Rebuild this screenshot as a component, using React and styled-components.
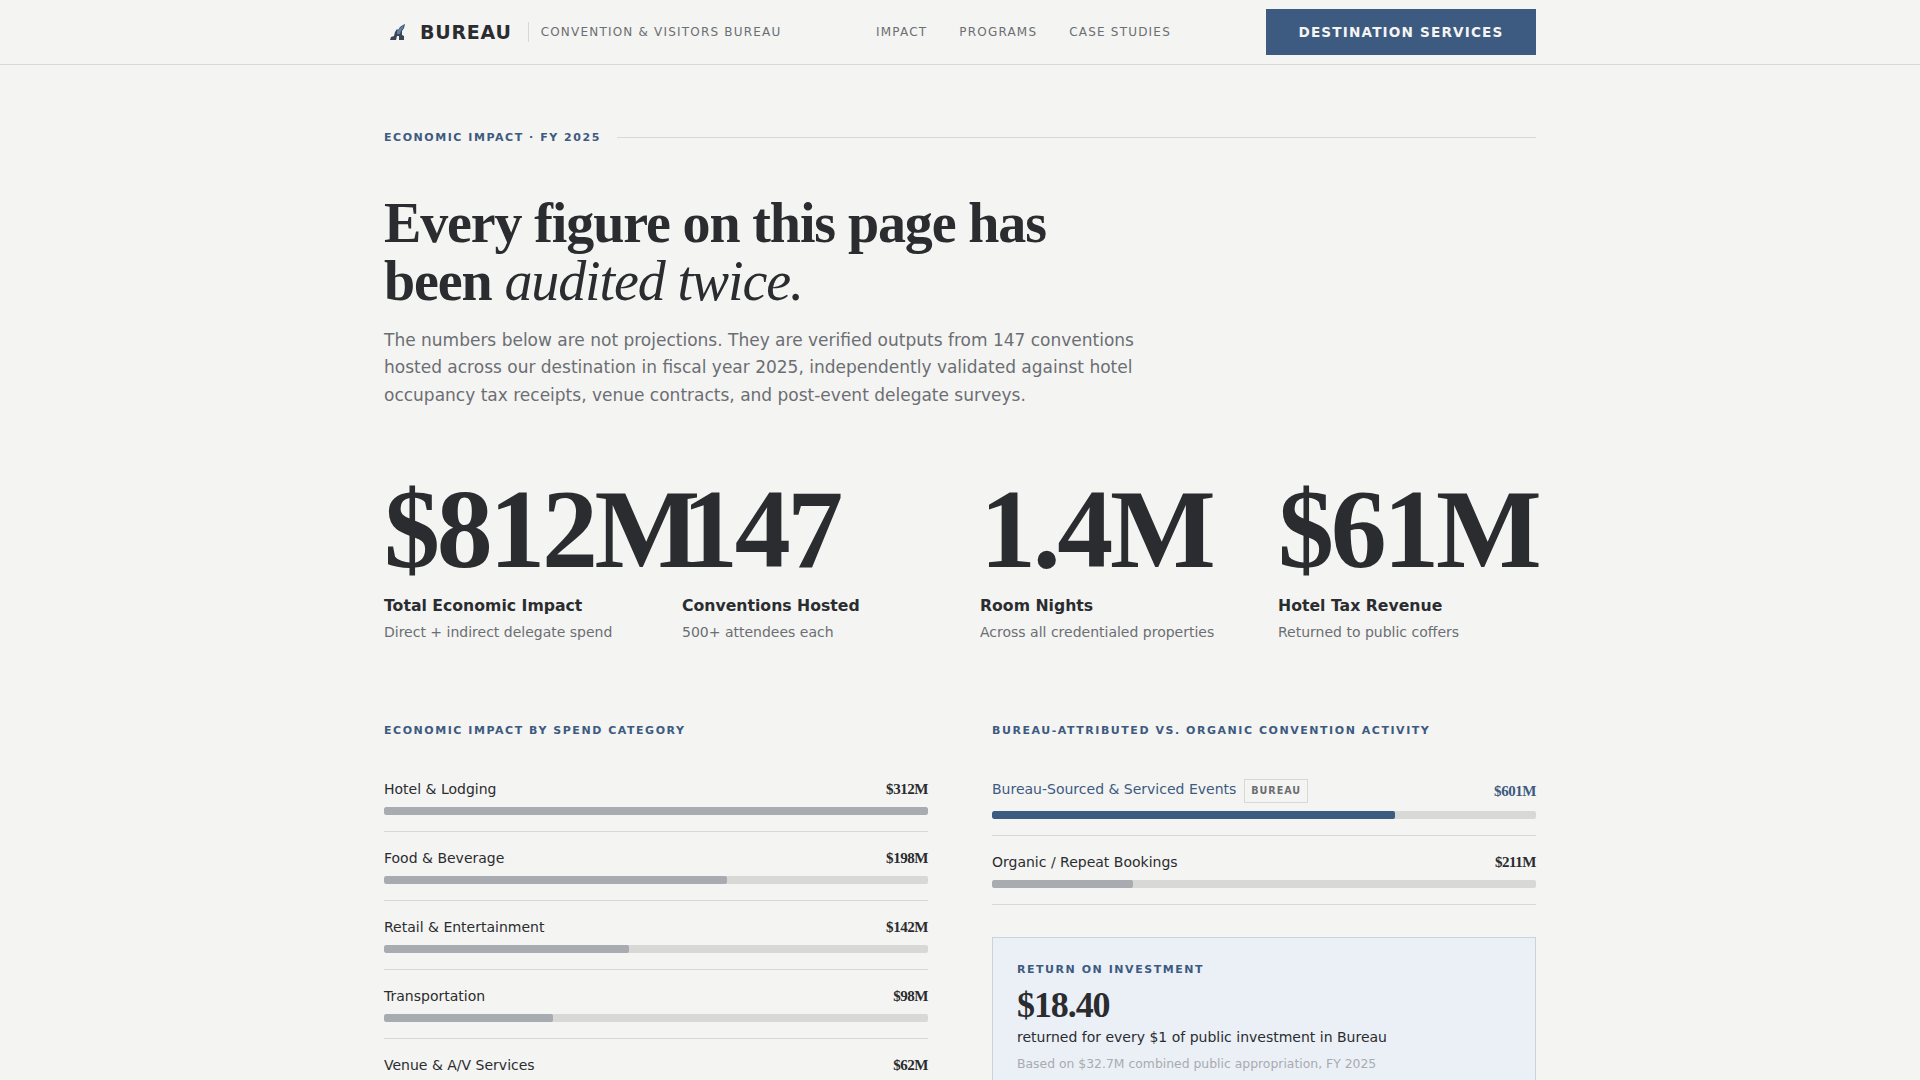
import React from 'react';
import styled, { createGlobalStyle } from 'styled-components';

const GlobalStyle = createGlobalStyle`
html, body {
  margin: 0;
  padding: 0;
  background: #f4f4f2;
  height: 1080px;
  overflow: hidden;
}
* { box-sizing: border-box; }
`;

const sans = `"DejaVu Sans", sans-serif`;
const serif = `"Liberation Serif", serif`;

const Page = styled.div`
  background: #f4f4f2;
  color: #2a2c30;
  font-family: ${sans};
`;

const Nav = styled.nav`
  height: 65px;
  border-bottom: 1px solid #d8d8d6;
`;

const NavInner = styled.div`
  width: 1152px;
  height: 64px;
  margin: 0 auto;
  display: flex;
  align-items: center;
`;

const Brand = styled.div`
  display: flex;
  align-items: center;
  width: 492px;
`;

const LogoMark = styled.svg`
  width: 18px;
  height: 18px;
  margin-left: 5px;
  margin-right: 13px;
`;

const BrandName = styled.span`
  font-size: 19px;
  font-weight: 700;
  letter-spacing: 0.76px;
  color: #2a2c30;
`;

const BrandSub = styled.span`
  margin-left: 16px;
  padding-left: 12px;
  border-left: 1px solid #d8d8d6;
  font-size: 12px;
  letter-spacing: 1.2px;
  line-height: 20px;
  color: #6b6e73;
`;

const NavLinks = styled.div`
  display: flex;
  gap: 32px;
`;

const NavLink = styled.a`
  font-size: 12px;
  letter-spacing: 1.2px;
  color: #6b6e73;
`;

const NavButton = styled.button`
  margin-left: auto;
  width: 270px;
  height: 46px;
  border: none;
  background: #3d5a80;
  color: #f4f4f2;
  font-family: ${sans};
  font-size: 13.6px;
  font-weight: 700;
  letter-spacing: 1.17px;
`;

const Main = styled.main`
  width: 1152px;
  margin: 0 auto;
  padding-top: 66px;
`;

const Eyebrow = styled.div`
  display: flex;
  align-items: center;
  gap: 16px;
  font-size: 11px;
  font-weight: 700;
  letter-spacing: 1.54px;
  color: #3d5a80;
  &::after {
    content: "";
    flex: 1;
    height: 1px;
    background: #d8d8d6;
  }
`;

const Headline = styled.h1`
  margin: 50px 0 0;
  max-width: 720px;
  font-family: ${serif};
  font-size: 56px;
  font-weight: 700;
  line-height: 58px;
  letter-spacing: -1.12px;
  color: #2a2c30;
  em {
    font-weight: 400;
  }
`;

const Lead = styled.p`
  margin: 16.6px 0 0;
  max-width: 780px;
  font-size: 17px;
  line-height: 27.5px;
  color: #6b6e73;
`;

const Stats = styled.section`
  margin-top: 64px;
  display: grid;
  grid-template-columns: repeat(4, minmax(0, 1fr));
  gap: 40px;
`;

const Stat = styled.div``;

const StatValue = styled.div`
  font-family: ${serif};
  font-size: 112px;
  font-weight: 700;
  line-height: 112px;
  letter-spacing: -3.36px;
  white-space: nowrap;
  color: #2a2c30;
`;

const StatLabel = styled.div`
  margin-top: 10px;
  font-size: 15.7px;
  font-weight: 700;
  line-height: 22px;
`;

const StatNote = styled.div`
  margin-top: 5px;
  font-size: 14px;
  line-height: 20px;
  color: #6b6e73;
`;

const Columns = styled.section`
  margin-top: 81px;
  display: grid;
  grid-template-columns: 1fr 1fr;
  gap: 64px;
`;

const SectionTitle = styled.h2`
  margin: 0 0 40px;
  font-size: 11px;
  font-weight: 700;
  line-height: 16px;
  letter-spacing: 1.54px;
  color: #3d5a80;
`;

const Row = styled.div`
  padding-bottom: 16px;
  margin-bottom: 16px;
  border-bottom: 1px solid #d8d8d6;
`;

const RowHead = styled.div`
  display: flex;
  justify-content: space-between;
  align-items: center;
  margin-bottom: 8px;
  font-size: 14px;
  line-height: 20px;
`;

const RowLabel = styled.span`
  display: flex;
  align-items: flex-start;
  color: ${(props) => (props.$accent ? '#3d5a80' : '#2a2c30')};
`;

const RowValue = styled.span`
  font-family: ${serif};
  font-size: 15px;
  font-weight: 700;
  letter-spacing: -0.45px;
  color: ${(props) => (props.$accent ? '#3d5a80' : '#2a2c30')};
`;

const Badge = styled.span`
  margin-left: 8px;
  padding: 2px 6px;
  border: 1px solid #d8d8d6;
  font-size: 9.6px;
  font-weight: 700;
  line-height: 18px;
  letter-spacing: 0.96px;
  color: #6b6e73;
`;

const Track = styled.div`
  height: 8px;
  border-radius: 2px;
  overflow: hidden;
  background: #d8d8d6;
`;

const Fill = styled.div`
  height: 100%;
  border-radius: 2px;
  background: ${(props) => (props.$accent ? '#3d5a80' : '#a8abb0')};
`;

const RoiCard = styled.div`
  margin-top: 32px;
  padding: 24px;
  background: #ebf0f6;
  border: 1px solid #c8d3e0;
`;

const RoiTitle = styled.div`
  font-size: 11px;
  font-weight: 700;
  letter-spacing: 1.54px;
  line-height: 16px;
  color: #3d5a80;
`;

const RoiValue = styled.div`
  margin-top: 7px;
  font-family: ${serif};
  font-size: 36px;
  font-weight: 700;
  line-height: 40px;
  letter-spacing: -1.08px;
`;

const RoiText = styled.div`
  margin-top: 1px;
  font-size: 14px;
  line-height: 22px;
`;

const RoiNote = styled.div`
  margin-top: 6px;
  font-size: 12.4px;
  line-height: 20px;
  color: #a8abb0;
`;

const stats = [
  { value: '$812M', label: 'Total Economic Impact', note: 'Direct + indirect delegate spend' },
  { value: '147', label: 'Conventions Hosted', note: '500+ attendees each' },
  { value: '1.4M', label: 'Room Nights', note: 'Across all credentialed properties' },
  { value: '$61M', label: 'Hotel Tax Revenue', note: 'Returned to public coffers' },
];

const spend = [
  { label: 'Hotel & Lodging', value: '$312M', pct: 100 },
  { label: 'Food & Beverage', value: '$198M', pct: 63 },
  { label: 'Retail & Entertainment', value: '$142M', pct: 45 },
  { label: 'Transportation', value: '$98M', pct: 31 },
  { label: 'Venue & A/V Services', value: '$62M', pct: 20 },
];

function App() {
  return (
    <Page>
      <GlobalStyle />
      <Nav>
        <NavInner>
          <Brand>
            <LogoMark viewBox="0 0 18 18">
              <path d="M1 17 L2 14 L5 13 L6 9 L8 6 L9 7 L11 4 L14 2 L16 1 L15 5 L13 8 L13 12 L15 13 L15 17 L10 17 L10 13 L8 13 L7 17 Z" fill="#3c4552" />
              <path d="M8 8 L11 5 L15 2 L14 5 L12 8 L11 11 L8 11 Z" fill="#5a82ad" />
            </LogoMark>
            <BrandName>BUREAU</BrandName>
            <BrandSub>CONVENTION &amp; VISITORS BUREAU</BrandSub>
          </Brand>
          <NavLinks>
            <NavLink>IMPACT</NavLink>
            <NavLink>PROGRAMS</NavLink>
            <NavLink>CASE STUDIES</NavLink>
          </NavLinks>
          <NavButton>DESTINATION SERVICES</NavButton>
        </NavInner>
      </Nav>
      <Main>
        <Eyebrow>ECONOMIC IMPACT · FY 2025</Eyebrow>
        <Headline>
          Every figure on this page has been <em>audited twice.</em>
        </Headline>
        <Lead>
          The numbers below are not projections. They are verified outputs from 147 conventions
          hosted across our destination in fiscal year 2025, independently validated against hotel
          occupancy tax receipts, venue contracts, and post-event delegate surveys.
        </Lead>
        <Stats>
          {stats.map((s) => (
            <Stat key={s.label}>
              <StatValue>{s.value}</StatValue>
              <StatLabel>{s.label}</StatLabel>
              <StatNote>{s.note}</StatNote>
            </Stat>
          ))}
        </Stats>
        <Columns>
          <div>
            <SectionTitle>ECONOMIC IMPACT BY SPEND CATEGORY</SectionTitle>
            {spend.map((r) => (
              <Row key={r.label}>
                <RowHead>
                  <RowLabel>{r.label}</RowLabel>
                  <RowValue>{r.value}</RowValue>
                </RowHead>
                <Track>
                  <Fill style={{ width: `${r.pct}%` }} />
                </Track>
              </Row>
            ))}
          </div>
          <div>
            <SectionTitle>BUREAU-ATTRIBUTED VS. ORGANIC CONVENTION ACTIVITY</SectionTitle>
            <Row>
              <RowHead>
                <RowLabel $accent>
                  Bureau-Sourced &amp; Serviced Events<Badge>BUREAU</Badge>
                </RowLabel>
                <RowValue $accent>$601M</RowValue>
              </RowHead>
              <Track>
                <Fill $accent style={{ width: '74%' }} />
              </Track>
            </Row>
            <Row>
              <RowHead>
                <RowLabel>Organic / Repeat Bookings</RowLabel>
                <RowValue>$211M</RowValue>
              </RowHead>
              <Track>
                <Fill style={{ width: '26%' }} />
              </Track>
            </Row>
            <RoiCard>
              <RoiTitle>RETURN ON INVESTMENT</RoiTitle>
              <RoiValue>$18.40</RoiValue>
              <RoiText>returned for every $1 of public investment in Bureau</RoiText>
              <RoiNote>Based on $32.7M combined public appropriation, FY 2025</RoiNote>
            </RoiCard>
          </div>
        </Columns>
      </Main>
    </Page>
  );
}

export default App;
